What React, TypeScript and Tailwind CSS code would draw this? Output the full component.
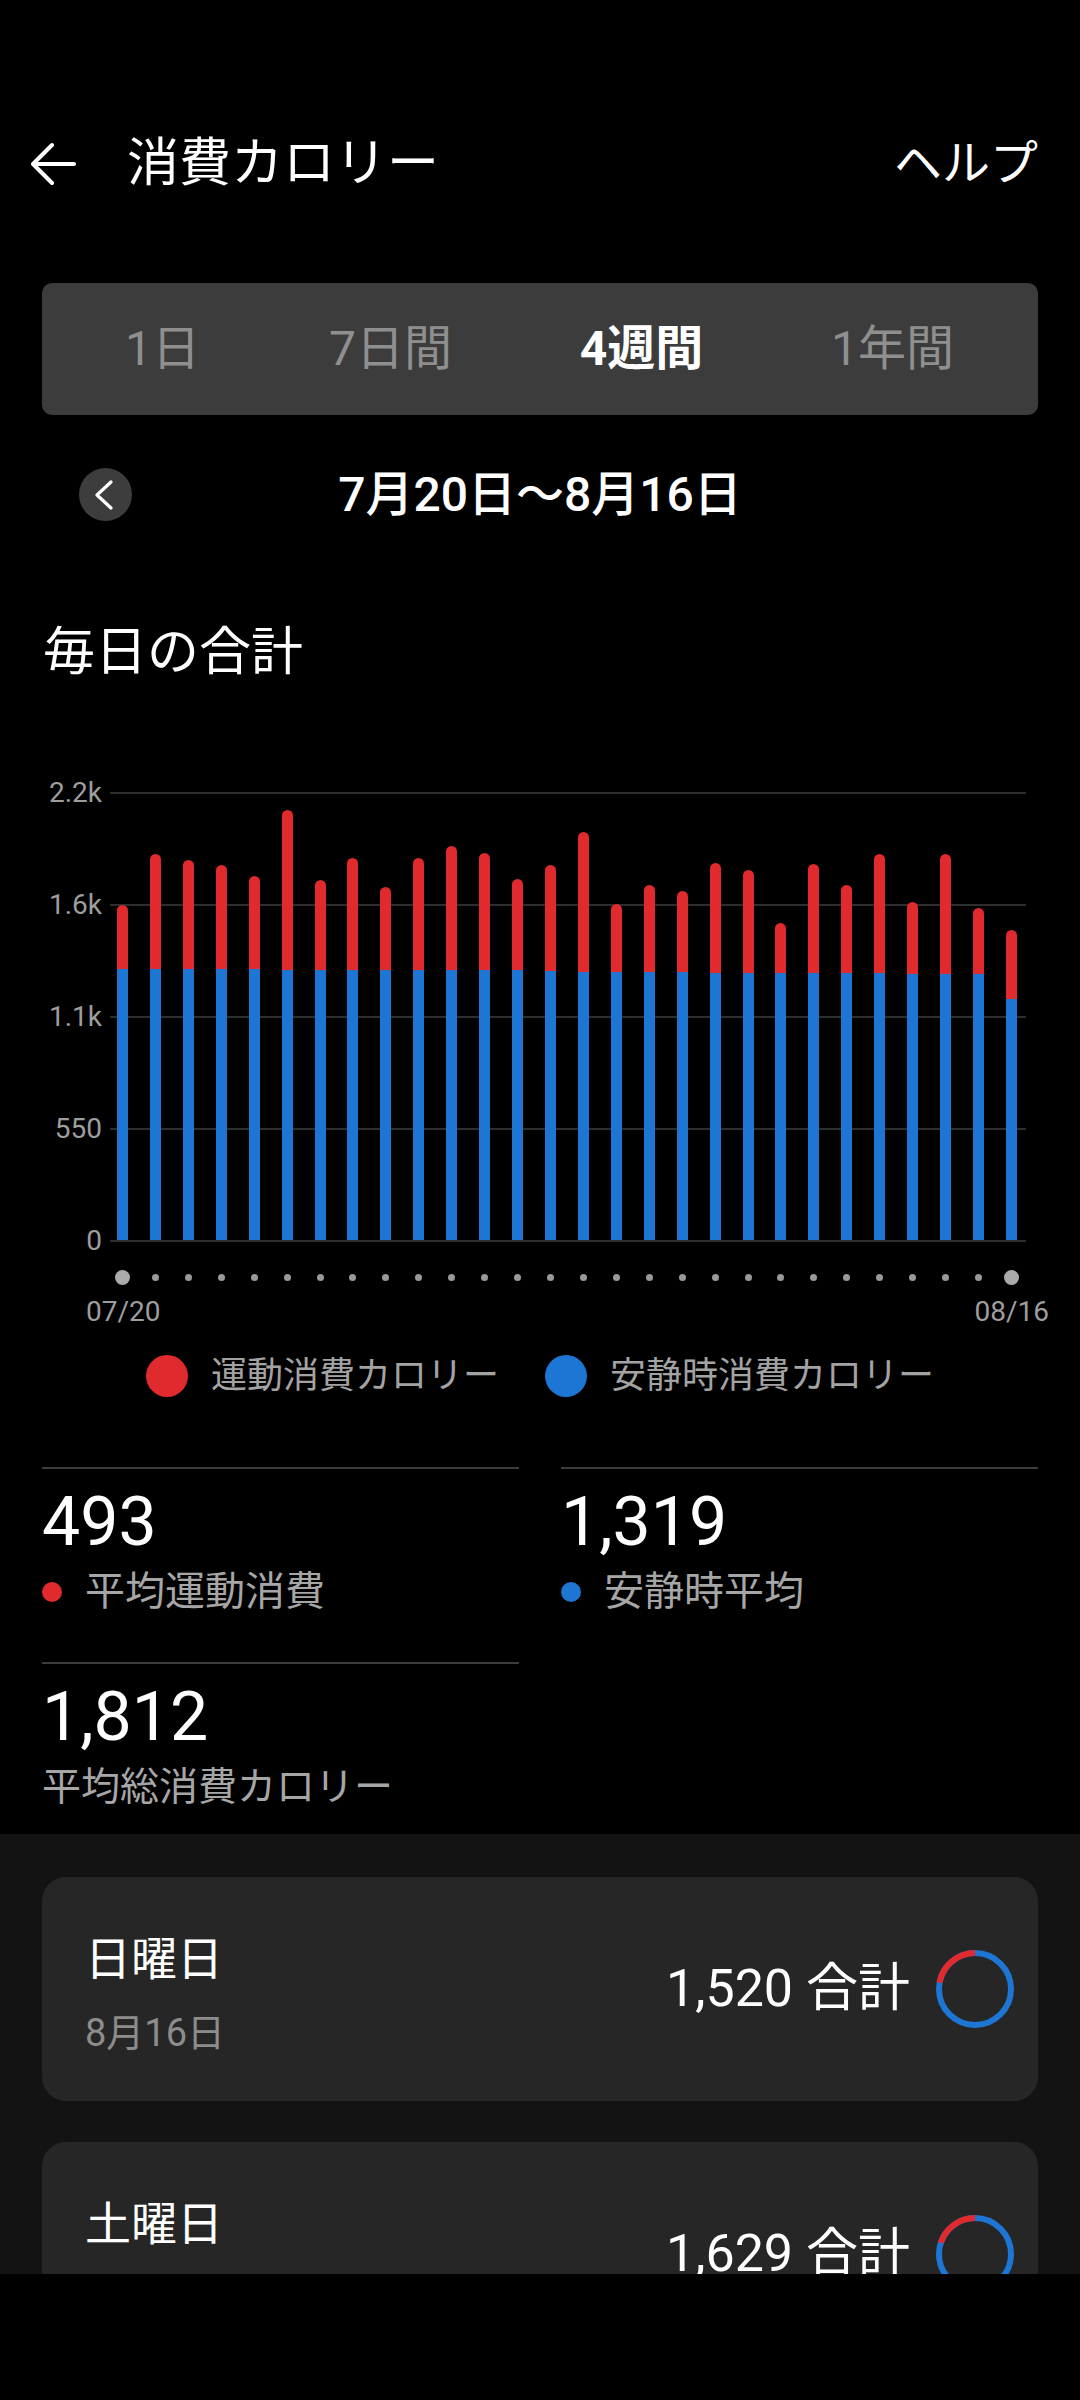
import React from "react";

const totals = [1647, 1898, 1865, 1844, 1790, 2113, 1768, 1875, 1732, 1878, 1937, 1901, 1775, 1844, 2003, 1652, 1744, 1714, 1852, 1818, 1558, 1849, 1744, 1896, 1660, 1898, 1629, 1520];
const rest = [1329, 1329, 1329, 1329, 1329, 1324, 1324, 1324, 1324, 1324, 1324, 1324, 1324, 1321, 1316, 1314, 1314, 1314, 1312, 1312, 1312, 1312, 1312, 1312, 1304, 1304, 1304, 1183];

const MAX = 2200;
const PLOT_H = 448;

function Ring({ total, resting }: { total: number; resting: number }) {
  const r = 36;
  const c = 39;
  const t = ((total - resting) / total) * Math.PI * 2;
  const ex = c - r * Math.sin(t);
  const ey = c - r * Math.cos(t);
  return (
    <svg width="78" height="78" viewBox="0 0 78 78">
      <circle cx={c} cy={c} r={r} fill="none" stroke="#1d76d3" strokeWidth="6" />
      <path d={`M ${c} ${c - r} A ${r} ${r} 0 0 0 ${ex} ${ey}`} fill="none" stroke="#e02a2d" strokeWidth="6" />
    </svg>
  );
}

function DayCard({ day, date, total, resting }: { day: string; date: string; total: number; resting: number }) {
  return (
    <div className="h-[224px] shrink-0 rounded-[24px] bg-[#262626] flex justify-between pl-[43px] pr-[24px]">
      <div className="pt-[54px] flex flex-col">
        <span className="text-[46px] leading-[56px] text-white">{day}</span>
        <span className="mt-[24px] text-[38px] leading-[44px] text-[#8c8c8c]">{date}</span>
      </div>
      <div className="flex items-center gap-[26px]">
        <span className="text-[52px] leading-[60px] text-white">{total.toLocaleString("en-US")} 合計</span>
        <Ring total={total} resting={resting} />
      </div>
    </div>
  );
}

export default function App() {
  const tabs = ["1日", "7日間", "4週間", "1年間"];
  const ticks = ["2.2k", "1.6k", "1.1k", "550", "0"];

  return (
    <div className="w-[1080px] h-[2400px] bg-black overflow-hidden flex flex-col font-[Roboto,'Noto_Sans_CJK_JP',sans-serif] text-white">
      {/* header */}
      <div className="flex items-center justify-between h-[72px] mt-[128px] pl-[31px] pr-[42px]">
        <div className="flex items-center">
          <svg width="45" height="44" viewBox="0 0 45 44" fill="none" stroke="white" strokeWidth="4" strokeLinecap="round" strokeLinejoin="round">
            <path d="M43 22H2M21 3L2 22l19 19" />
          </svg>
          <span className="ml-[51px] text-[52px] leading-[72px]">消費カロリー</span>
        </div>
        <span className="text-[48px] leading-[72px]">ヘルプ</span>
      </div>

      {/* period tabs */}
      <div className="mt-[83px] mx-[42px] h-[132px] rounded-[10px] bg-[#3c3c3c] grid grid-cols-[223px_1fr_1fr_1fr] items-center pr-[20px] text-center">
        {tabs.map((t, i) => (
          <span
            key={t}
            className={
              i === 2
                ? "text-[48px] font-bold text-white"
                : i === 0
                  ? "pl-[18px] text-[48px] text-[#8f8f8f]"
                  : "text-[48px] text-[#8f8f8f]"
            }
          >
            {t}
          </span>
        ))}
      </div>

      {/* date range */}
      <div className="mt-[53px] h-[53px] grid grid-cols-[1fr_auto_1fr] items-center px-[79px]">
        <div className="w-[53px] h-[53px] rounded-full bg-[#3d3d3d] flex items-center justify-center">
          <svg width="53" height="53" viewBox="0 0 53 53" fill="none" stroke="white" strokeWidth="3.2" strokeLinecap="round" strokeLinejoin="round">
            <path d="M32 14L18 27l14 13" />
          </svg>
        </div>
        <span className="text-[48px] leading-[53px] font-medium">7月20日〜8月16日</span>
        <div />
      </div>

      <div className="mt-[102px] px-[43px] text-[52px] leading-[60px]">毎日の合計</div>

      {/* chart */}
      <div className="mt-[109px] flex">
        <div className="w-[102px] h-[450px] shrink-0 flex flex-col justify-between">
          {ticks.map((t) => (
            <div key={t} className="h-[2px] flex items-center justify-end text-[28px] leading-none text-[#9e9e9e]">
              {t}
            </div>
          ))}
        </div>
        <div className="ml-[8px] w-[916px] h-[450px] relative">
          <div className="absolute inset-0 flex flex-col justify-between">
            {ticks.map((t) => (
              <div key={t} className="h-[2px] bg-[#2e2e2e]" />
            ))}
          </div>
          <div className="relative h-full flex items-end justify-between pl-[7px] pr-[9px] pb-[2px]">
            {totals.map((tot, i) => (
              <div key={i} className="w-[11px] flex flex-col">
                <div className="bg-[#e02a2d] rounded-t-[6px]" style={{ height: ((tot - rest[i]) * PLOT_H) / MAX }} />
                <div className="bg-[#1d76d3]" style={{ height: (rest[i] * PLOT_H) / MAX }} />
              </div>
            ))}
          </div>
        </div>
      </div>

      {/* x axis dots */}
      <div className="mt-[27px] ml-[110px] w-[916px] h-[16px] flex items-center justify-between pl-[7px] pr-[9px]">
        {totals.map((_, i) => (
          <div key={i} className="w-[11px] flex justify-center">
            {i === 0 || i === totals.length - 1 ? (
              <div className="w-[15px] h-[15px] shrink-0 rounded-full bg-[#ababab]" />
            ) : (
              <div className="w-[7px] h-[7px] rounded-full bg-[#9a9a9a]" />
            )}
          </div>
        ))}
      </div>
      <div className="mt-[10px] flex justify-between pl-[86px] pr-[31px] text-[28px] leading-[34px] text-[#9e9e9e]">
        <span>07/20</span>
        <span>08/16</span>
      </div>

      {/* legend */}
      <div className="mt-[26px] h-[42px] flex items-center justify-center gap-[46px] text-[36px] text-[#a3a3a3]">
        <div className="flex items-center gap-[23px]">
          <div className="w-[42px] h-[42px] rounded-full bg-[#e02a2d]" />
          <span>運動消費カロリー</span>
        </div>
        <div className="flex items-center gap-[23px]">
          <div className="w-[42px] h-[42px] rounded-full bg-[#1d76d3]" />
          <span>安静時消費カロリー</span>
        </div>
      </div>

      {/* averages */}
      <div className="mt-[70px] grid grid-cols-2 gap-x-[42px] gap-y-[46px] px-[42px]">
        <div className="border-t-2 border-[#3c3c3c] pt-[13px]">
          <div className="text-[68px] leading-[80px]">493</div>
          <div className="mt-[6px] h-[48px] flex items-center gap-[23px]">
            <div className="w-[20px] h-[20px] rounded-full bg-[#e02a2d]" />
            <span className="text-[40px] leading-[48px] text-[#a6a6a6]">平均運動消費</span>
          </div>
        </div>
        <div className="border-t-2 border-[#3c3c3c] pt-[13px]">
          <div className="text-[68px] leading-[80px]">1,319</div>
          <div className="mt-[6px] h-[48px] flex items-center gap-[23px]">
            <div className="w-[20px] h-[20px] rounded-full bg-[#1d76d3]" />
            <span className="text-[40px] leading-[48px] text-[#a6a6a6]">安静時平均</span>
          </div>
        </div>
        <div className="border-t-2 border-[#3c3c3c] pt-[13px]">
          <div className="text-[68px] leading-[80px]">1,812</div>
          <div className="mt-[6px] text-[39px] leading-[48px] text-[#a6a6a6]">平均総消費カロリー</div>
        </div>
      </div>

      {/* daily list */}
      <div className="mt-[23px] h-[440px] shrink-0 bg-[#131313] overflow-hidden px-[42px] pt-[43px] flex flex-col gap-[41px]">
        <DayCard day="日曜日" date="8月16日" total={1520} resting={1183} />
        <DayCard day="土曜日" date="8月15日" total={1629} resting={1304} />
      </div>
    </div>
  );
}
